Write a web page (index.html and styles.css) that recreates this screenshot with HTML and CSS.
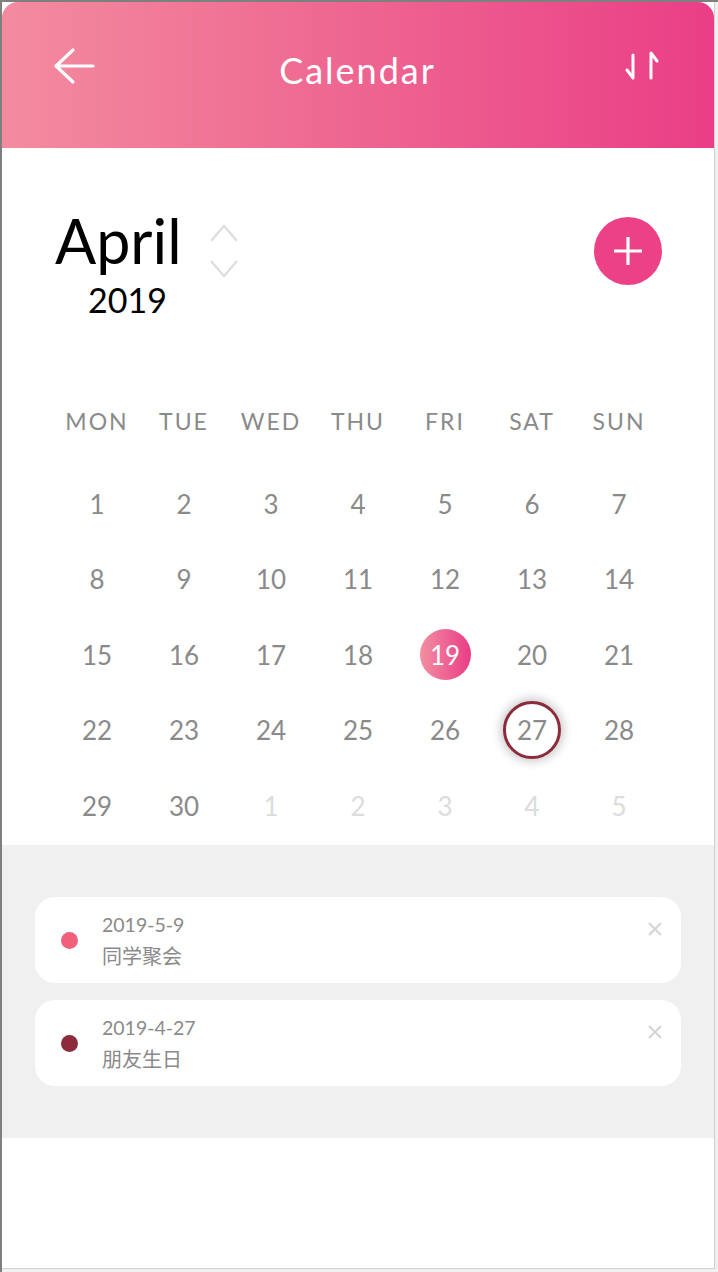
FILE: index.html
```html
<!DOCTYPE html>
<html lang="zh-CN">
<head>
<meta charset="utf-8">
<title>Calendar</title>
<link rel="stylesheet" href="styles.css">
</head>
<body>
<div class="frame">
  <div class="phone">
    <header class="topbar">
      <svg class="back" width="44" height="40" viewBox="0 0 44 40">
        <path d="M21 4 L4 20 L21 36 M4 20 H41" fill="none" stroke="#fff" stroke-width="3.2" stroke-linecap="round" stroke-linejoin="round"/>
      </svg>
      <h1 class="title">Calendar</h1>
      <svg class="sort" width="40" height="36" viewBox="0 0 40 36">
        <path d="M10 5 V28 L4 20 M28 28 V3 L34 11" fill="none" stroke="#fff" stroke-width="3" stroke-linecap="round" stroke-linejoin="round"/>
      </svg>
    </header>

    <section class="month">
      <div class="month-name">
        <div class="month-label">April</div>
        <div class="year">2019</div>
      </div>
      <svg class="chevrons" width="30" height="54" viewBox="0 0 30 54">
        <path d="M2 17 L15 2 L28 17 M2 37 L15 52 L28 37" fill="none" stroke="#dedede" stroke-width="2.2"/>
      </svg>
      <div class="spacer"></div>
      <button class="add" aria-label="add">
        <svg width="30" height="30" viewBox="0 0 30 30">
          <path d="M15 1 V29 M1 15 H29" stroke="#fff" stroke-width="3.2"/>
        </svg>
      </button>
    </section>

    <section class="calendar">
      <div class="weekdays">
        <div>MON</div><div>TUE</div><div>WED</div><div>THU</div><div>FRI</div><div>SAT</div><div>SUN</div>
      </div>
      <div class="days">
        <div class="day"><span>1</span></div>
        <div class="day"><span>2</span></div>
        <div class="day"><span>3</span></div>
        <div class="day"><span>4</span></div>
        <div class="day"><span>5</span></div>
        <div class="day"><span>6</span></div>
        <div class="day"><span>7</span></div>
        <div class="day"><span>8</span></div>
        <div class="day"><span>9</span></div>
        <div class="day"><span>10</span></div>
        <div class="day"><span>11</span></div>
        <div class="day"><span>12</span></div>
        <div class="day"><span>13</span></div>
        <div class="day"><span>14</span></div>
        <div class="day"><span>15</span></div>
        <div class="day"><span>16</span></div>
        <div class="day"><span>17</span></div>
        <div class="day"><span>18</span></div>
        <div class="day"><span class="today">19</span></div>
        <div class="day"><span>20</span></div>
        <div class="day"><span>21</span></div>
        <div class="day"><span>22</span></div>
        <div class="day"><span>23</span></div>
        <div class="day"><span>24</span></div>
        <div class="day"><span>25</span></div>
        <div class="day"><span>26</span></div>
        <div class="day"><span class="marked">27</span></div>
        <div class="day"><span>28</span></div>
        <div class="day"><span>29</span></div>
        <div class="day"><span>30</span></div>
        <div class="day other"><span>1</span></div>
        <div class="day other"><span>2</span></div>
        <div class="day other"><span>3</span></div>
        <div class="day other"><span>4</span></div>
        <div class="day other"><span>5</span></div>
      </div>
    </section>

    <section class="events">
      <div class="event">
        <span class="dot dot-pink"></span>
        <div class="event-text">
          <div class="event-date">2019-5-9</div>
          <div class="event-name">同学聚会</div>
        </div>
        <svg class="close" width="14" height="14" viewBox="0 0 14 14">
          <path d="M1 1 L13 13 M13 1 L1 13" stroke="#d4d4d4" stroke-width="2"/>
        </svg>
      </div>
      <div class="event">
        <span class="dot dot-wine"></span>
        <div class="event-text">
          <div class="event-date">2019-4-27</div>
          <div class="event-name">朋友生日</div>
        </div>
        <svg class="close" width="14" height="14" viewBox="0 0 14 14">
          <path d="M1 1 L13 13 M13 1 L1 13" stroke="#d4d4d4" stroke-width="2"/>
        </svg>
      </div>
    </section>
  </div>
</div>
</body>
</html>
```

FILE: styles.css
```css
* { box-sizing: border-box; }

html, body {
  margin: 0;
  padding: 0;
  background: #f0f0f0;
}

body {
  font-family: Lato, "Noto Sans", "Noto Sans CJK SC", sans-serif;
}

.frame {
  width: 718px;
  height: 1272px;
  border-top: 2px solid #7f7f7f;
  border-left: 2px solid #7f7f7f;
  background: #f0f0f0;
  overflow: hidden;
}

.phone {
  width: 713px;
  height: 1267px;
  background: #fff;
  border-right: 1px solid #cfcfcf;
  border-bottom: 1px solid #cfcfcf;
  display: flex;
  flex-direction: column;
}

/* header */
.topbar {
  height: 146px;
  flex: none;
  border-radius: 16px 16px 0 0;
  background: linear-gradient(90deg, #f38b9f 0%, #ef6d93 40%, #ea3e86 100%);
  display: grid;
  grid-template-columns: 1fr auto 1fr;
  align-items: start;
  padding: 0 51px 0 50px;
}

.back {
  margin-top: 44px;
  justify-self: start;
}

.title {
  margin: 46px 0 0;
  font-weight: 400;
  font-size: 36px;
  line-height: 44px;
  letter-spacing: 2px;
  color: #fff;
}

.sort {
  margin-top: 48px;
  justify-self: end;
}

/* month */
.month {
  display: flex;
  align-items: flex-start;
  padding: 61px 52px 0 53px;
}

.month-label {
  font-size: 61px;
  line-height: 64px;
  color: #000;
}

.year {
  margin: 10px 0 0 33px;
  font-size: 34px;
  line-height: 34px;
  color: #000;
}

.chevrons {
  margin: 15px 0 0 27px;
}

.spacer { flex: 1; }

.add {
  margin-top: 8px;
  width: 68px;
  height: 68px;
  border-radius: 50%;
  border: none;
  padding: 0;
  background: #ec4186;
  display: flex;
  align-items: center;
  justify-content: center;
}

/* calendar */
.calendar {
  padding: 0 51.5px 1.5px;
}

.weekdays {
  margin-top: 66px;
  display: grid;
  grid-template-columns: repeat(7, 1fr);
  height: 76px;
  line-height: 76px;
  text-align: center;
  font-size: 23px;
  letter-spacing: 2px;
  color: #8a8a8a;
}

.days {
  margin-top: 7px;
  display: grid;
  grid-template-columns: repeat(7, 1fr);
  grid-auto-rows: 75.5px;
}

.day {
  display: flex;
  align-items: center;
  justify-content: center;
  font-size: 26px;
  color: #8a8a8a;
}

.day span {
  display: flex;
  align-items: center;
  justify-content: center;
}

.day.other { color: #dcdcdc; }

.today {
  width: 51px;
  height: 51px;
  border-radius: 50%;
  background: linear-gradient(90deg, #f28fa2 0%, #ea3c86 100%);
  color: #fff;
}

.marked {
  width: 58px;
  height: 58px;
  border-radius: 50%;
  border: 3px solid #8b2b3c;
  background: #fff;
  box-shadow: 0 0 10px 3px rgba(0, 0, 0, 0.2);
}

/* events */
.events {
  background: #f0f0f0;
  padding: 52px 33px;
  display: flex;
  flex-direction: column;
  gap: 17px;
}

.event {
  height: 86px;
  background: #fff;
  border-radius: 20px;
  display: flex;
  align-items: center;
  padding: 0 19px 0 26px;
}

.dot {
  width: 17px;
  height: 17px;
  border-radius: 50%;
  flex: none;
}

.dot-pink { background: #f0607a; }
.dot-wine { background: #8b2b3c; }

.event-text {
  flex: 1;
  margin-left: 24px;
  color: #8a8a8a;
  font-size: 19.5px;
  line-height: 31px;
}

.event-name {
  font-family: "Noto Sans CJK SC", sans-serif;
  font-size: 20px;
}

.close {
  align-self: flex-start;
  margin-top: 25px;
}
```
